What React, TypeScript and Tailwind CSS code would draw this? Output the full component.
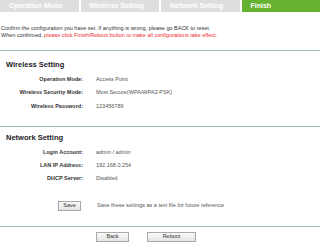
const font = { fontFamily: '"Liberation Sans", Arial, sans-serif' };

const tabs = ['Operation Mode', 'Wireless Setting', 'Network Setting', 'Finish'];

function Row({ label, value, tight }: { label: string; value: string; tight?: boolean }) {
  return (
    <div
      className={`grid grid-cols-[83px_1fr] items-center gap-x-[13px] text-[5.5px] ${
        tight ? 'h-[13px]' : 'h-[13.5px]'
      }`}
    >
      <span className="text-right font-bold text-[#333]">{label}</span>
      <span className="text-[#555]">{value}</span>
    </div>
  );
}

function Btn({ children, className }: { children: string; className: string }) {
  return (
    <button
      className={`flex h-[10px] items-center justify-center border border-[#a8a8a8] bg-gradient-to-b from-[#fafafa] to-[#e4e4e4] text-[5.5px] text-[#333] ${className}`}
    >
      {children}
    </button>
  );
}

export default function App() {
  return (
    <main className="h-[249px] w-[320px] overflow-hidden bg-white" style={font}>
      <nav className="grid h-[12px] grid-cols-4 gap-[2px]">
        {tabs.map((t) => (
          <div
            key={t}
            className={`flex items-center pl-[9px] text-[7px] font-bold text-white ${
              t === 'Finish' ? 'bg-[#64b22f]' : 'bg-[#dedede]'
            }`}
          >
            {t}
          </div>
        ))}
      </nav>

      <div className="mt-[13px] pl-[1px] text-[5.5px] leading-[7px] text-[#333]">
        <p>Confirm the configuration you have set. If anything is wrong, please go BACK to reset.</p>
        <p>
          When confirmed, <span className="text-[#f0282d]">please click Finish/Reboot button to make all configurations take effect.</span>
        </p>
      </div>

      <div className="mt-[11px] h-[1px] bg-[#9cc5a8]" />

      <section className="pt-[9px]">
        <h2 className="pl-[6px] text-[7.5px] font-bold leading-[10px] text-[#222]">Wireless Setting</h2>
        <div className="mt-[2px]">
          <Row label="Operation Mode:" value="Access Point" />
          <Row label="Wireless Security Mode:" value="Most Secure(WPA/WPA2-PSK)" />
          <Row label="Wireless Password:" value="123456789" />
        </div>
      </section>

      <div className="mt-[13px] h-[1px] bg-[#9cc5a8]" />

      <section className="pt-[6px]">
        <h2 className="pl-[6px] text-[7.5px] font-bold leading-[10px] text-[#222]">Network Setting</h2>
        <div className="mt-[3px]">
          <Row tight label="Login Account:" value="admin / admin" />
          <Row tight label="LAN IP Address:" value="192.168.0.254" />
          <Row tight label="DHCP Server:" value="Disabled" />
        </div>
        <div className="mt-[16px] flex items-center">
          <Btn className="ml-[58px] w-[23px]">Save</Btn>
          <span className="ml-[16px] text-[5.5px] text-[#555]">Save these settings as a text file for future reference</span>
        </div>
      </section>

      <div className="mt-[15px] h-[1px] bg-[#9cc5a8]" />

      <div className="mt-[5px] flex pl-[96px]">
        <Btn className="w-[33px]">Back</Btn>
        <Btn className="ml-[18px] w-[49px]">Reboot</Btn>
      </div>
    </main>
  );
}
